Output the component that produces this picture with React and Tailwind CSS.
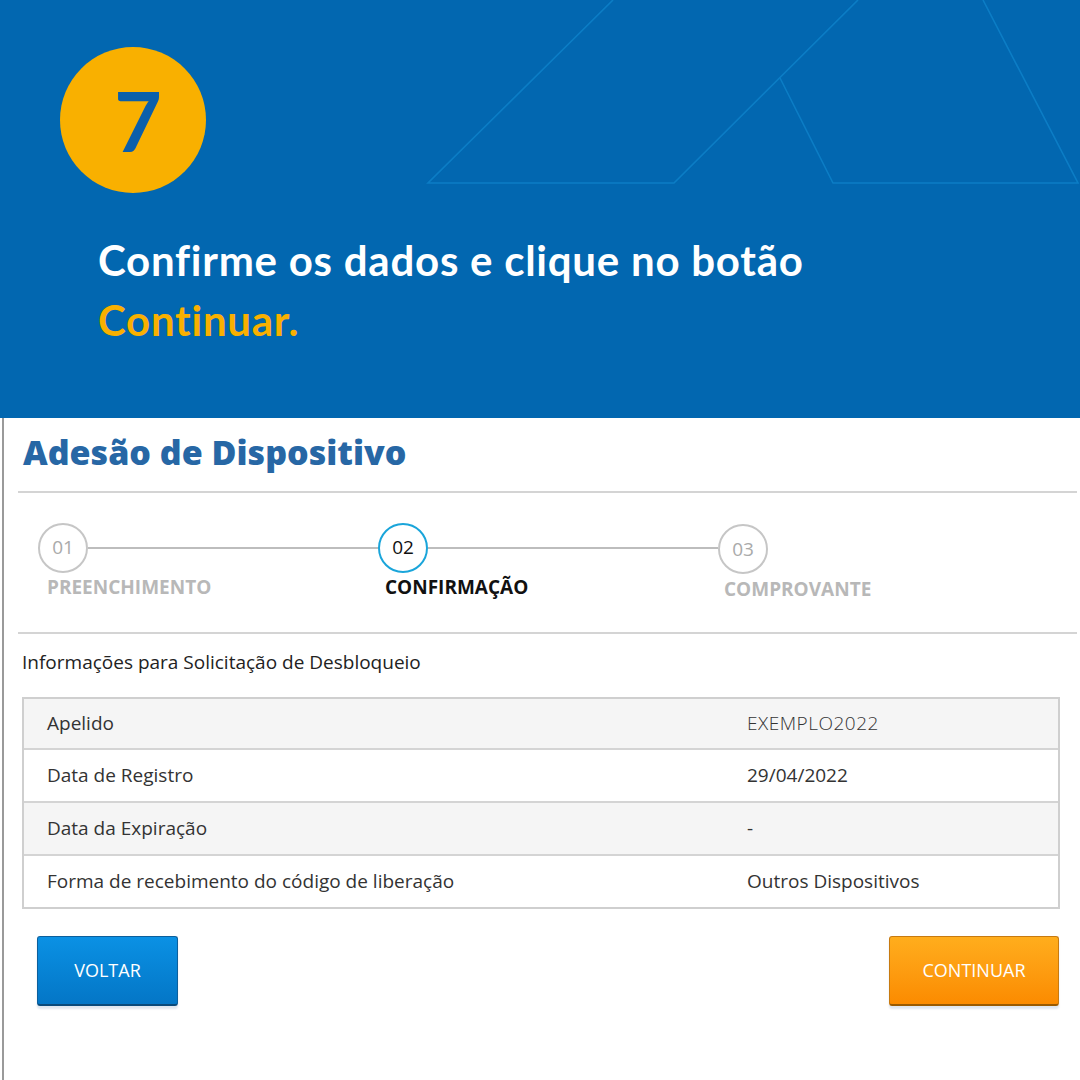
import React from 'react';

const steps = [
    { num: '01', label: 'PREENCHIMENTO', active: false },
    { num: '02', label: 'CONFIRMAÇÃO', active: true },
    { num: '03', label: 'COMPROVANTE', active: false },
];

const rows = [
    { label: 'Apelido', value: 'EXEMPLO2022', light: true },
    { label: 'Data de Registro', value: '29/04/2022' },
    { label: 'Data da Expiração', value: '-' },
    { label: 'Forma de recebimento do código de liberação', value: 'Outros Dispositivos' },
];

const Decoration = () => (
    <svg className="absolute inset-0" width="1080" height="418" viewBox="0 0 1080 418" fill="none">
        <path d="M613 0 L428 183 L674 183 L858 0" stroke="#0c7dc5" strokeWidth="1.6" />
        <path d="M780 78 L833 183 L1078 183 L983 0" stroke="#0c7dc5" strokeWidth="1.6" />
    </svg>
);

const Stepper = () => (
    <div className="h-[139px] pt-[28px] pl-[34px]">
        <div className="grid grid-cols-[340px_340px_auto]">
            {steps.map((s, i) => (
                <div key={s.num} className="flex items-center">
                    <div
                        className={`w-[50px] h-[50px] shrink-0 rounded-full border-[2.5px] flex items-center justify-center text-[19px] ${s.active
                            ? 'border-[#1aa5da] text-[#111]'
                            : 'border-[#c6c6c6] text-[#aaaaaa]'
                            } ${i === 2 ? 'mt-[3px]' : ''}`}
                    >
                        {s.num}
                    </div>
                    {i < 2 && <div className="flex-1 h-[2px] bg-[#bdbdbd]" />}
                </div>
            ))}
        </div>
        <div className="grid grid-cols-[340px_340px_auto] mt-[3px]">
            {steps.map((s, i) => (
                <p
                    key={s.label}
                    className={`leading-[20px] text-[19px] font-bold ${s.active ? 'text-[#111]' : 'text-[#b8b8b8]'
                        } ${i === 0 ? 'pl-[9px]' : i === 1 ? 'pl-[7px]' : 'pl-[6px] pt-[2px]'}`}
                >
                    {s.label}
                </p>
            ))}
        </div>
    </div>
);

export default function App() {
    return (
        <div className="w-[1080px] h-[1080px] overflow-hidden bg-white font-['Open_Sans',sans-serif]">
            {/* Blue banner */}
            <header className="relative h-[418px] bg-[#0267b0] overflow-hidden">
                <Decoration />
                <div className="relative pt-[47px] pl-[60px]">
                    <div className="w-[146px] h-[146px] rounded-full bg-[#f9b000] flex items-center justify-center pl-[10px]">
                        <span className="font-['Lato',sans-serif] font-bold text-[82px] leading-none text-[#0b5fab]">7</span>
                    </div>
                </div>
                <h1 className="relative mt-[37px] pl-[98px] font-['Lato',sans-serif] font-bold text-[42px] tracking-[0.75px] leading-[60px] text-white">
                    Confirme os dados e clique no botão
                    <br />
                    <span className="text-[#f9b000]">Continuar.</span>
                </h1>
            </header>

            {/* Form panel */}
            <main className="ml-[2px] h-[662px] border-l-2 border-[#9a9a9a]">
                <h2 className="pt-[14px] pl-[19px] text-[34px] leading-[40px] font-extrabold text-[#2767a5]">
                    Adesão de Dispositivo
                </h2>
                <div className="mt-[19px] ml-[14px] mr-[3px] h-[2px] bg-[#d4d4d4]" />

                <Stepper />

                <div className="ml-[14px] mr-[3px] h-[2px] bg-[#d4d4d4]" />

                <p className="pt-[16px] pl-[18px] text-[19px] leading-[24px] text-[#222]">
                    Informações para Solicitação de Desbloqueio
                </p>

                {/* Data table */}
                <div className="mt-[23px] ml-[18px] w-[1038px] border-2 border-[#cfcfcf]">
                    {rows.map((r, i) => (
                        <div
                            key={r.label}
                            className={`flex items-center text-[19px] text-[#333] ${i % 2 === 0 ? 'bg-[#f5f5f5]' : 'bg-white'
                                } ${i > 0 ? 'h-[53px] border-t-2 border-[#d4d4d4]' : 'h-[49px]'}`}
                        >
                            <span className="w-[700px] pl-[23px]">{r.label}</span>
                            <span className={`pl-[23px] ${r.light ? 'font-light tracking-[0.5px]' : ''}`}>{r.value}</span>
                        </div>
                    ))}
                </div>

                {/* Actions */}
                <div className="mt-[27px] pl-[33px] pr-[21px] flex justify-between">
                    <button className="w-[141px] h-[70px] rounded-[3px] border border-[#0c5f9c] border-b-2 border-b-[#0a4a7a] bg-gradient-to-b from-[#0b91e4] to-[#0476c6] text-white text-[18px] shadow-[0_3px_2px_rgba(0,60,120,0.12)]">
                        VOLTAR
                    </button>
                    <button className="w-[170px] h-[70px] rounded-[3px] border border-[#c77a10] border-b-2 border-b-[#9a5a00] bg-gradient-to-b from-[#ffad1c] to-[#fb8b00] text-white text-[18px] shadow-[0_3px_2px_rgba(0,60,120,0.12)]">
                        CONTINUAR
                    </button>
                </div>
            </main>
        </div>
    );
}
